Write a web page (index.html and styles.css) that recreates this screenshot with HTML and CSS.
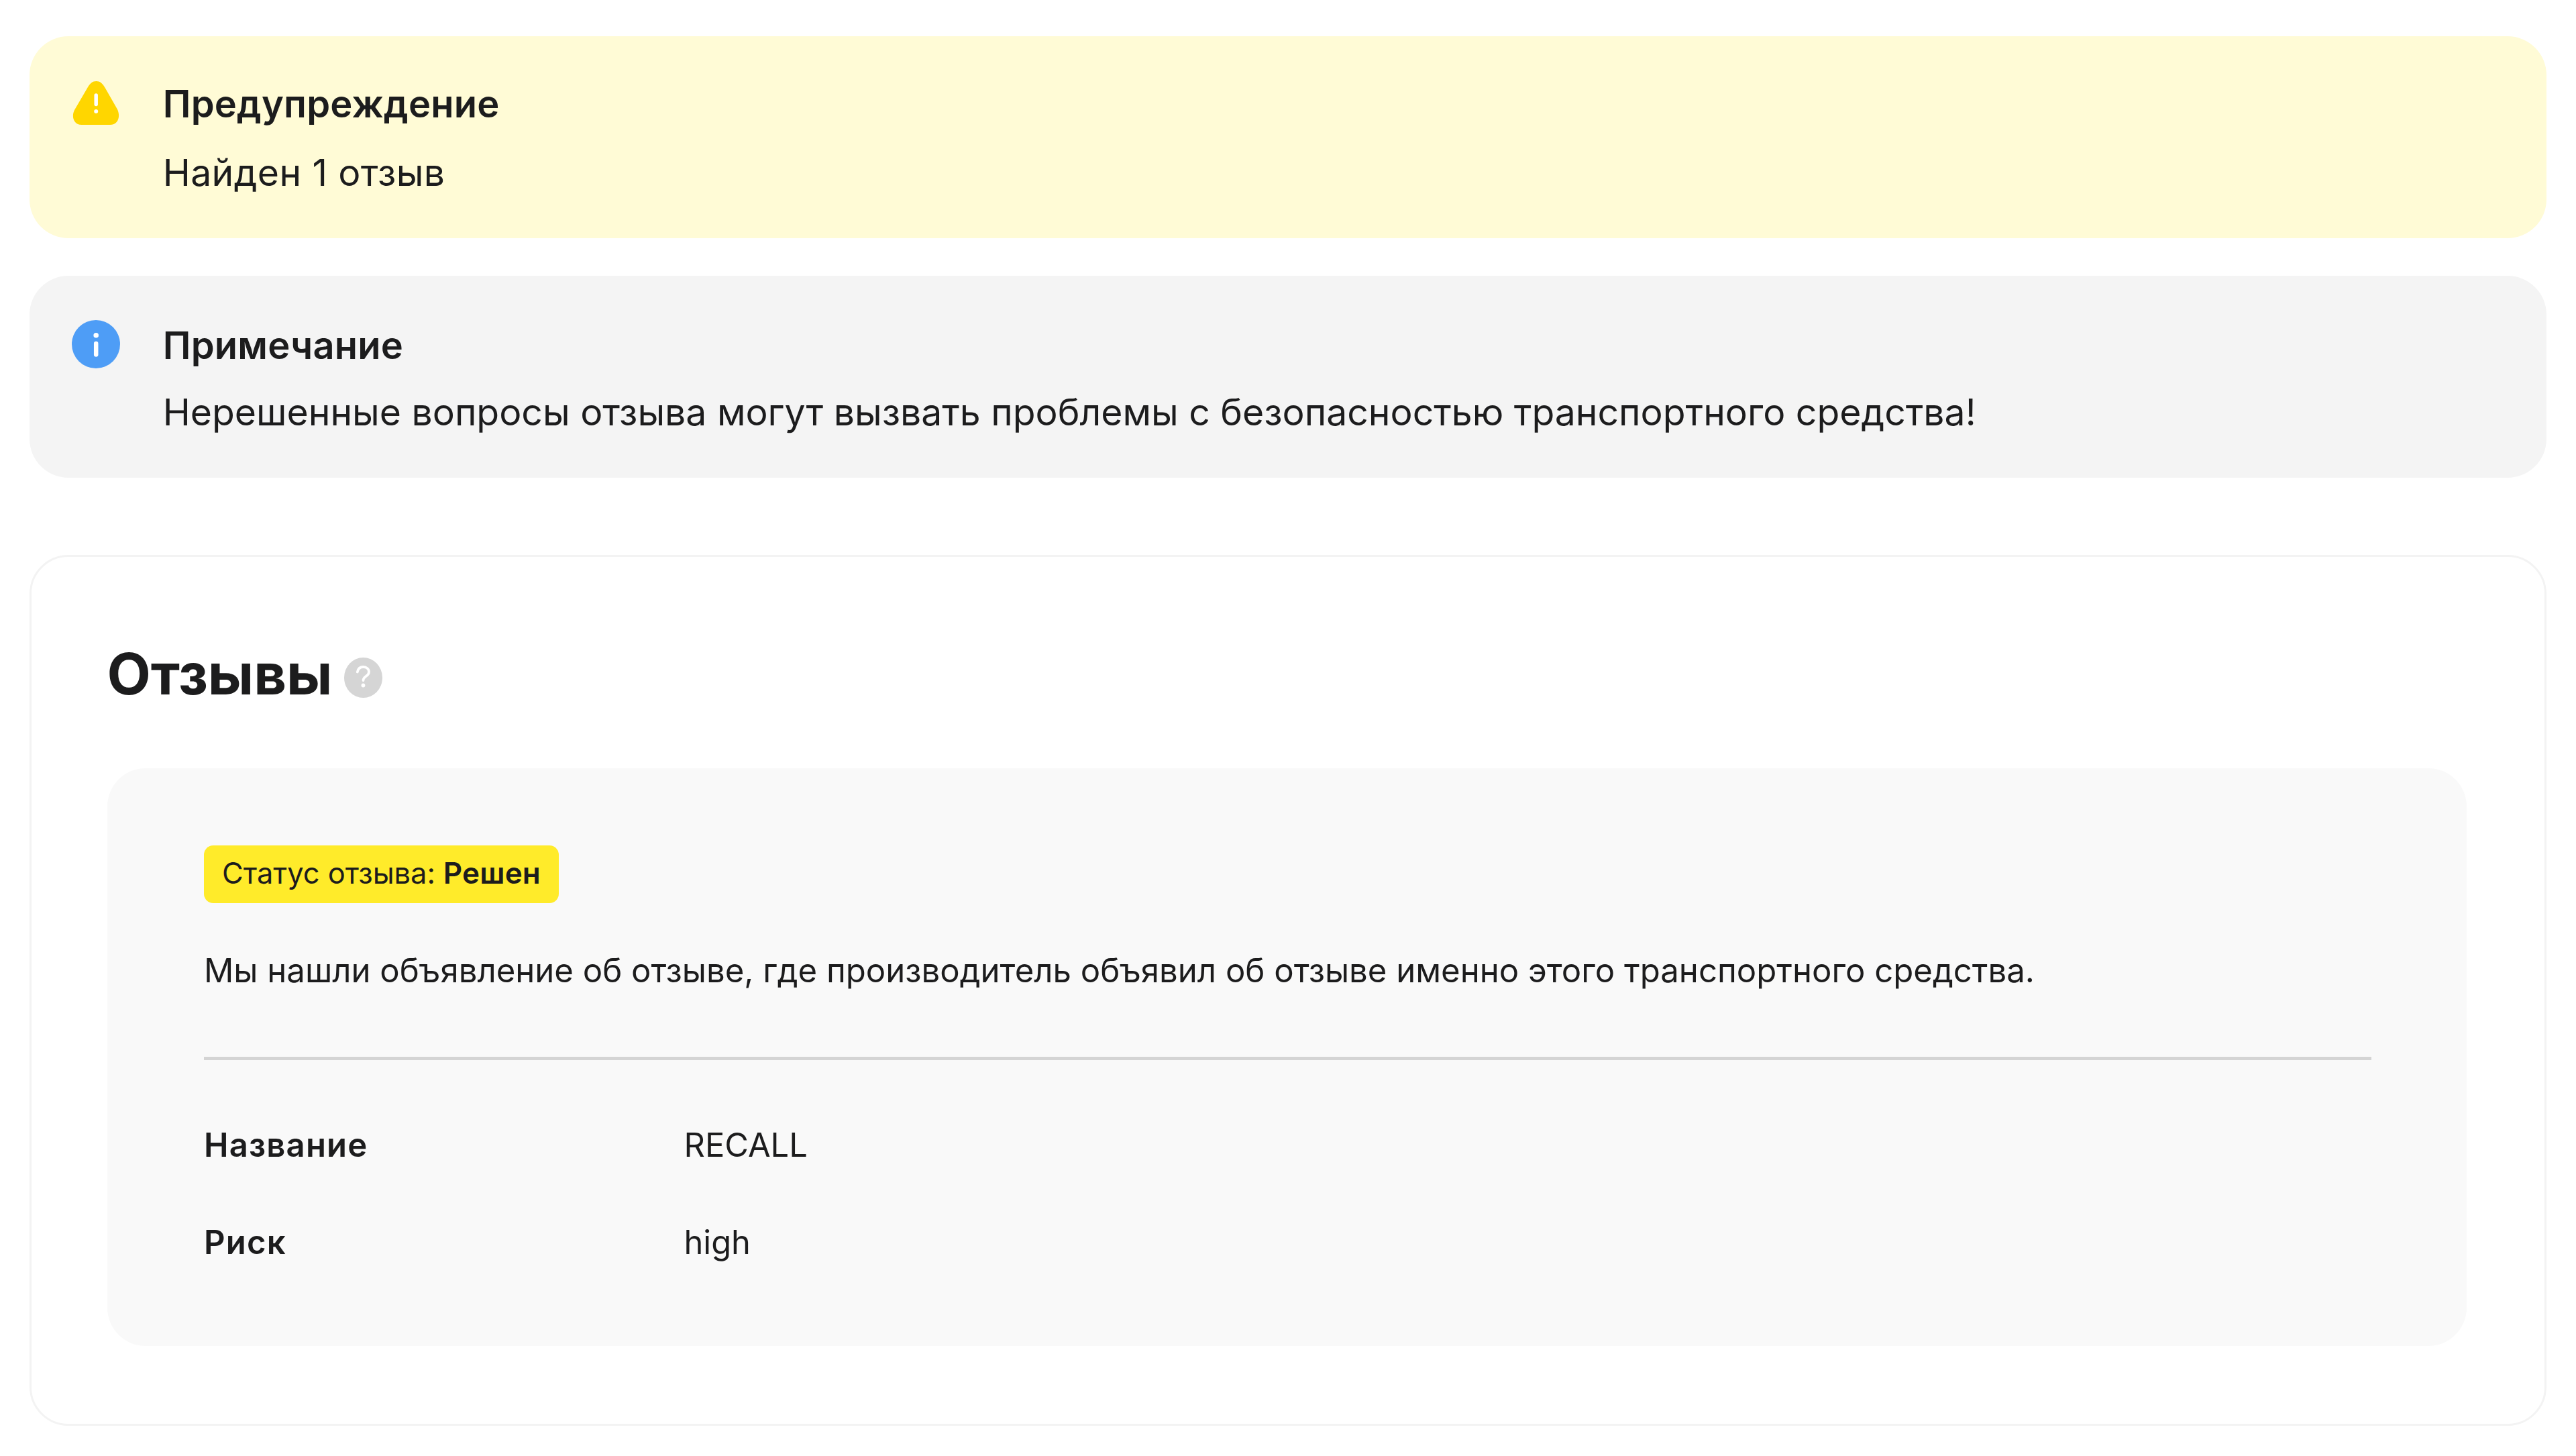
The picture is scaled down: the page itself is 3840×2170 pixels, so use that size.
FILE: index.html
```html
<!DOCTYPE html>
<html lang="ru">
<head>
<meta charset="utf-8">
<title>Отзывы</title>
<link rel="stylesheet" href="styles.css">
</head>
<body>
<main class="page">
  <section class="notice notice-warning">
    <svg class="notice-icon" viewBox="0 0 72 72" aria-hidden="true">
      <path fill="#ffd600" d="M23 16.500C27 9 31 6 36.500 6S46 9 50 16.500L68 48C73 59 69 71 57 71H14.500C3 71 -1 59 4 49Z"/>
      <path d="M36.200 27V40.500" stroke="#fff" stroke-width="5.500" stroke-linecap="round"/>
      <circle cx="36.200" cy="51" r="3" fill="#fff"/>
    </svg>
    <div class="notice-body">
      <h2 class="notice-title">Предупреждение</h2>
      <p class="notice-text notice-text-short">Найден 1 отзыв</p>
    </div>
  </section>
  <section class="notice notice-info">
    <svg class="notice-icon" viewBox="0 0 72 72" aria-hidden="true">
      <circle cx="36" cy="36" r="36" fill="#4e9df6"/>
      <circle cx="36.200" cy="22.800" r="3.800" fill="#fff"/>
      <path d="M36.200 35V51.500" stroke="#fff" stroke-width="6.500" stroke-linecap="round"/>
    </svg>
    <div class="notice-body">
      <h2 class="notice-title">Примечание</h2>
      <p class="notice-text">Нерешенные вопросы отзыва могут вызвать проблемы с безопасностью транспортного средства!</p>
    </div>
  </section>
  <section class="card">
    <header class="card-header">
      <h1 class="card-title">Отзывы</h1>
      <svg class="help" viewBox="0 0 57 60" aria-hidden="true">
        <ellipse cx="28.500" cy="30" rx="28.500" ry="30" fill="#d5d5d5"/>
        <path d="M19.800 21.500C20.800 16.500 24 14 28.500 14C33.500 14 37 17 37 21.500C37 28 28.500 27.500 28.500 34" fill="none" stroke="#fff" stroke-width="3.800" stroke-linecap="round"/>
        <circle cx="28.400" cy="41.500" r="2.900" fill="#fff"/>
      </svg>
    </header>
    <div class="panel">
      <div class="badge"><span>Статус отзыва:</span> <strong class="badge-value">Решен</strong></div>
      <p class="description">Мы нашли объявление об отзыве, где производитель объявил об отзыве именно этого транспортного средства.</p>
      <hr class="divider">
      <dl class="details">
        <dt>Название</dt><dd>RECALL</dd>
        <dt>Риск</dt><dd>high</dd>
      </dl>
    </div>
  </section>
</main>
</body>
</html>
```
FILE: styles.css
```css
* { box-sizing: border-box; margin: 0; padding: 0; }

body {
  background: #fff;
  color: #1c1c1d;
  font-family: Inter, "Liberation Sans", sans-serif;
}

.page { display: flow-root; padding: 54px 44px 45px; }

.notice {
  display: flex;
  gap: 64px;
  height: 301px;
  padding-left: 62.7px;
  border-radius: 58px;
}
.notice-icon { flex: none; width: 72px; height: 72px; }
.notice-title {
  font-size: 56px;
  font-weight: 600;
  line-height: 80px;
  letter-spacing: 0.2px;
}
.notice-text {
  font-size: 55.28px;
  line-height: 80px;
  white-space: nowrap;
}
.notice-text-short { letter-spacing: 0.4px; }

.notice-warning { padding-top: 61px; background: #fffbd6; }
.notice-warning .notice-text { margin-top: 22px; }

.notice-info { margin-top: 56px; padding-top: 64px; background: #f4f4f4; }
.notice-info .notice-icon { margin-top: 2px; }
.notice-info .notice-text { margin-top: 19px; }

.card {
  margin-top: 115px;
  padding: 122px 116px 116px 112.5px;
  border: 3px solid #f3f3f3;
  border-radius: 58px;
}
.card-header { display: flex; align-items: flex-start; gap: 18px; height: 104px; }
.card-title { font-size: 84.86px; font-weight: 700; line-height: 104px; letter-spacing: -0.1px; }
.help { width: 57px; height: 60px; margin-top: 28px; }

.panel {
  height: 861px;
  margin-top: 89px;
  padding: 115px 142px 0 144.5px;
  border-radius: 57px;
  background: #f9f9f9;
}
.badge {
  width: 529px;
  height: 86px;
  padding-left: 27px;
  border-radius: 14px;
  background: #ffeb2a;
  font-size: 43.4px;
  line-height: 82px;
  white-space: nowrap;
}
.badge-value { margin-left: -0.5px; font-weight: 600; font-size: 44px; letter-spacing: 0.2px; }

.description {
  margin-top: 64px;
  font-size: 49.1px;
  line-height: 72px;
  white-space: nowrap;
}
.divider { height: 5px; margin: 93px 0 91px; border: 0; background: #d4d4d4; }

.details {
  display: grid;
  grid-template-columns: 715.5px 1fr;
  row-gap: 73px;
  font-size: 48.8px;
  line-height: 72px;
}
.details dt { font-size: 49px; font-weight: 600; letter-spacing: 1.2px; }
```
